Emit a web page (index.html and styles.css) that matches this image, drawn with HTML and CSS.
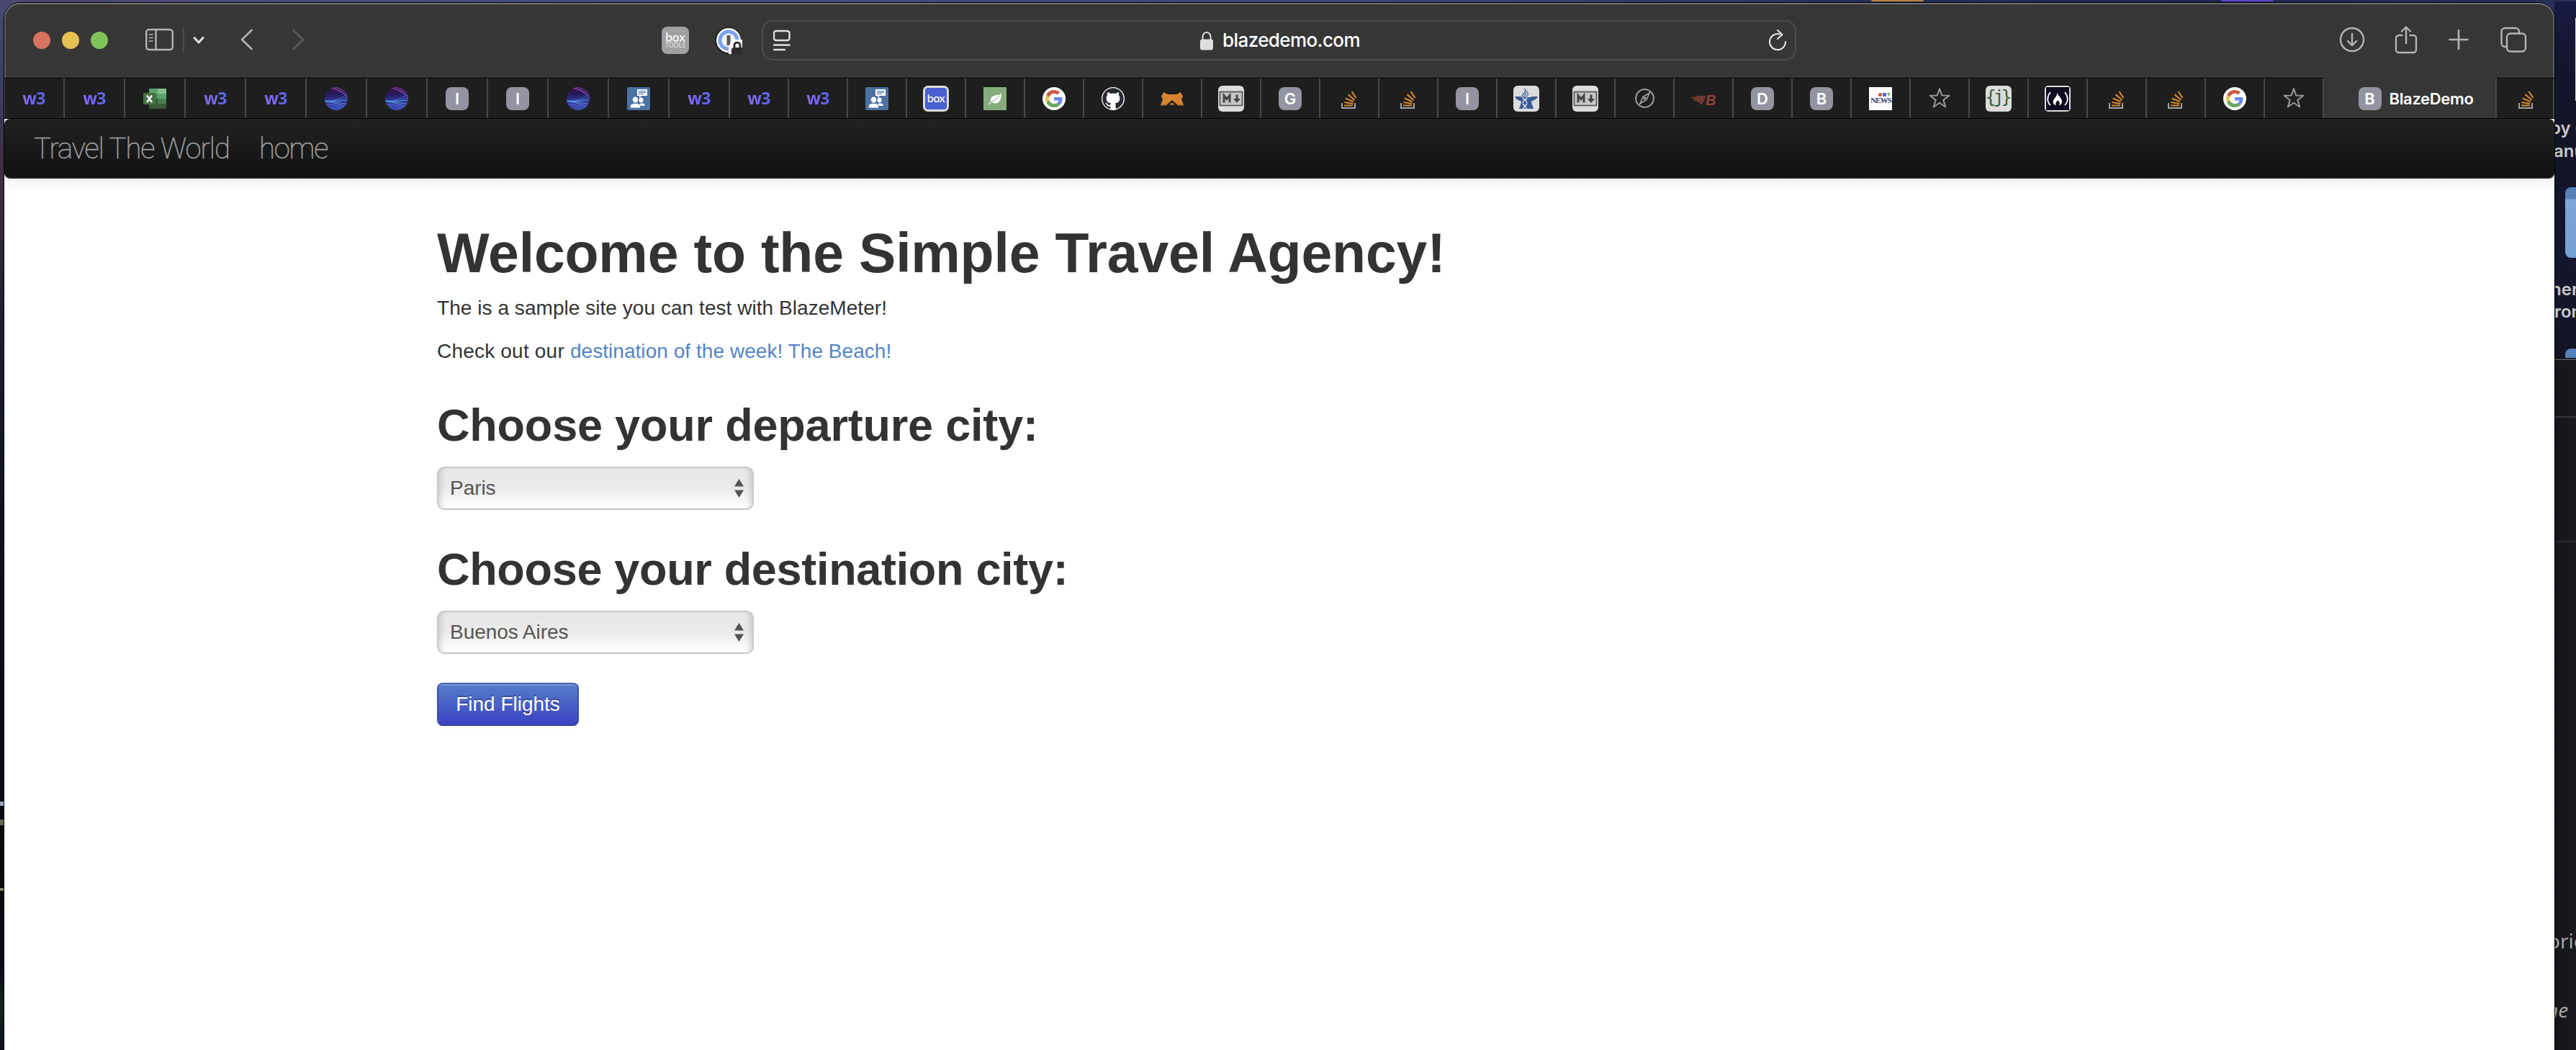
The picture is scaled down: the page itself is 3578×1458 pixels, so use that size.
FILE: index.html
```html
<!DOCTYPE html>
<html lang="en">
<head>
<meta charset="utf-8">
<title>BlazeDemo</title>
<link rel="stylesheet" href="styles.css">
</head>
<body>
<svg class="defs" width="0" height="0" aria-hidden="true">
  <defs>
    <linearGradient id="globe-fill" x1="0" y1="0" x2="0" y2="1">
      <stop offset="0" stop-color="#3a1440"/><stop offset=".3" stop-color="#26195c"/><stop offset=".6" stop-color="#2d3690"/><stop offset="1" stop-color="#4350c0"/>
    </linearGradient>
    <clipPath id="globe-clip"><circle cx="16" cy="16" r="16"/></clipPath>
    <symbol id="globe" viewBox="0 0 32 32">
      <g clip-path="url(#globe-clip)" fill="none">
        <rect width="32" height="32" fill="url(#globe-fill)"/>
        <path d="M8 1C16 3 24 5 31 12M10 0C18 5 26 7 32 15M13 0C20 1 27 5 31 9" stroke="#8a4cb4" stroke-width="1"/>
        <path d="M0 19C12 19 22 17 32 9M0 19C12 20 24 18 32 14" stroke="#4a6fd0" stroke-width=".9"/>
        <path d="M0 19.500C10 20 20 19 32 18M0 19.500C12 21 22 24 28 28M0 19.500C12 20 24 22 32 24" stroke="#5f98da" stroke-width=".9"/>
        <path d="M2 24C12 23 20 27 25 31" stroke="#5d6ee0" stroke-width=".8"/>
      </g>
    </symbol>
    <symbol id="excel" viewBox="0 0 32 32">
      <path d="M8 2h12v7H8z" fill="#5da06a"/><path d="M20 2h12v7H20z" fill="#81c08c"/>
      <path d="M8 9h12v7H8z" fill="#4b8a58"/><path d="M20 9h12v7H20z" fill="#5fa26d"/>
      <path d="M8 16h12v7H8z" fill="#35593a"/><path d="M20 16h12v7H20z" fill="#4a7f4c"/>
      <path d="M8 23h24v7H8z" fill="#38593a"/>
      <rect x="0" y="8" width="17" height="16" rx="1" fill="#447243"/>
      <path d="M5 11.500 12 21M12 11.500 5 21" stroke="#fff" stroke-width="2.400"/>
    </symbol>
    <symbol id="people" viewBox="0 0 32 32">
      <rect width="32" height="32" rx="2" fill="#4a72a2"/>
      <path d="M14 3h14v9H20l-3 3v-3h-3z" fill="#fff"/><path d="M16 5.500h10M16 7.500h10M16 9.500h7" stroke="#4a72a2" stroke-width="1"/>
      <ellipse cx="19.500" cy="18" rx="3" ry="3.500" fill="#fff"/><path d="M17 26v-2c0-2 7-2 7.500 0v2z" fill="#fff"/>
      <ellipse cx="11.500" cy="17.500" rx="4" ry="4.500" fill="#fff" stroke="#4a72a2" stroke-width=".8"/><path d="M4.500 29v-3c0-2 2-3 5-3.500h4c3 .5 5 1.500 5 3.500v3z" fill="#fff" stroke="#4a72a2" stroke-width=".8"/>
    </symbol>
    <symbol id="leaf" viewBox="0 0 32 32">
      <rect width="32" height="32" fill="#84ac7c"/>
      <path d="M25 8c0 8-2 14-8 14.500-2 .2-4-.5-5.500-1.500L8 24.500l-1-1 3-3C8 14 15 11 19 11c3 0 5-1 6-3z" fill="#fff"/>
      <path d="M10 21c5-2 9-5 12-9" stroke="#84ac7c" fill="none"/>
    </symbol>
    <symbol id="google" viewBox="0 0 48 48">
      <circle cx="24" cy="24" r="24" fill="#fff"/>
      <g transform="translate(6 6) scale(.75)">
        <path fill="#c95a41" d="M24 9.500c3.540 0 6.710 1.220 9.210 3.600l6.850-6.850C35.900 2.380 30.470 0 24 0 14.620 0 6.510 5.380 2.560 13.220l7.980 6.190C12.430 13.720 17.740 9.500 24 9.500z"/>
        <path fill="#6a86ee" d="M46.980 24.550c0-1.570-.15-3.090-.38-4.550H24v9.020h12.940c-.58 2.960-2.260 5.480-4.780 7.180l7.730 6c4.510-4.180 7.090-10.360 7.090-17.650z"/>
        <path fill="#ecbf45" d="M10.530 28.590c-.48-1.450-.76-2.990-.76-4.590s.27-3.140.76-4.590l-7.980-6.190C.92 16.460 0 20.120 0 24c0 3.880.92 7.540 2.560 10.780l7.970-6.190z"/>
        <path fill="#6aa560" d="M24 48c6.480 0 11.930-2.130 15.890-5.810l-7.730-6c-2.150 1.450-4.920 2.300-8.160 2.300-6.260 0-11.570-4.220-13.470-9.910l-7.980 6.190C6.510 42.620 14.620 48 24 48z"/>
      </g>
    </symbol>
    <symbol id="github" viewBox="-.7 -.7 17.400 17.400">
      <circle cx="8" cy="8" r="8.700" fill="#fff"/>
      <path fill="#25282e" d="M8 0C3.580 0 0 3.580 0 8c0 3.540 2.290 6.530 5.470 7.590.4.070.55-.17.55-.38 0-.19-.01-.82-.01-1.490-2.010.37-2.530-.49-2.690-.94-.09-.23-.48-.94-.82-1.130-.28-.15-.68-.52-.01-.53.63-.01 1.080.58 1.230.82.72 1.210 1.870.87 2.330.66.07-.52.28-.87.51-1.070-1.780-.2-3.640-.89-3.640-3.950 0-.87.31-1.590.82-2.150-.08-.2-.36-1.020.08-2.120 0 0 .67-.21 2.200.82.64-.18 1.320-.27 2-.27.68 0 1.360.09 2 .27 1.530-1.040 2.200-.82 2.200-.82.44 1.100.16 1.920.08 2.120.51.56.82 1.270.82 2.150 0 3.070-1.870 3.750-3.650 3.950.29.25.54.73.54 1.480 0 1.070-.01 1.930-.01 2.200 0 .21.15.46.55.38A8.013 8.013 0 0 0 16 8c0-4.420-3.580-8-8-8z"/>
    </symbol>
    <symbol id="fox" viewBox="0 0 32 32">
      <path d="M4 7l6 3h12l6-3 3 6-2 4 3 8h-8l-8-7-8 7H0l3-8-2-4z" fill="#d78433"/><path d="M.5 23.500h9L8 25.500H0zM22.500 23.500h9l.5 2h-8zM13 25l1-3h4l1 3z" fill="#b87026"/>
    </symbol>
    <symbol id="markdown" viewBox="0 0 36 36">
      <rect width="36" height="36" rx="6" fill="#dcdcdc"/><rect x="2.500" y="8.500" width="31" height="19" fill="#c6c6c6" stroke="#5a5a5a" stroke-width="1.800"/>
      <path d="M8 23.500v-10l4 5 4-5v10" fill="none" stroke="#444" stroke-width="3"/><path d="M26 12.500v7" stroke="#444" stroke-width="3"/><path d="M21 18h10l-5 6z" fill="#444"/>
    </symbol>
    <symbol id="stack" viewBox="0 0 22 25">
      <path d="M1 17v7h18v-7" fill="none" stroke="#a0a0a6" stroke-width="2"/>
      <path d="M4 20.500h12M4.300 16l12 2M5.800 10.500l11 4.800M9.500 5.200l9 7.800M14.500 1l6 9" stroke="#d4882f" stroke-width="2.200"/>
    </symbol>
    <symbol id="anvil" viewBox="0 0 36 36">
      <rect width="36" height="36" rx="6" fill="#dcdcdc"/>
      <path d="M2 15h8l2 1h12l2-1h8c-1 4-6 5-9 7 0 3 2 6 3 10H8c1-4 3-7 3-10-3-2-8-3-9-7z" fill="#3c5c96"/>
      <path d="M15 4c5 4-3 6-3 11h7c3-4 1-7-4-11z" fill="#b4c3de" stroke="#3c5c96"/><path d="M13 13l4-6M16 14l2-5" stroke="#3c5c96"/>
      <path d="M13 16c0 4 6 4 6 8s-5 4-5 8M19 16c0 4-6 4-6 8s5 4 5 8M13 19h6M13 27h6" stroke="#e4e8f0" stroke-width="1.100" fill="none"/>
    </symbol>
    <symbol id="compass" viewBox="0 0 27 27">
      <circle cx="13.500" cy="13.500" r="12.400" fill="none" stroke="#9c9c9c" stroke-width="2"/><path d="M20 6 16 15.500 7 21l4-9.500z" fill="none" stroke="#9c9c9c" stroke-width="1.800"/><circle cx="13.500" cy="13.500" r="2" fill="#9c9c9c"/>
    </symbol>
    <symbol id="wing" viewBox="0 0 20 14"><path d="M0 2l5 1 3-2h12v4l-2 1v3l-2 1v3h-4v-3H8V8H4V5H1z" fill="#6e382f"/></symbol>
    <symbol id="star" viewBox="0 0 28 28"><path d="M14 2l3.100 8.800 9.400.2-7.500 5.700 2.700 9L14 20.300l-7.700 5.400 2.700-9L1.500 11l9.400-.2z" fill="none" stroke="#979797" stroke-width="1.900" stroke-linejoin="round"/></symbol>
    <symbol id="flame" viewBox="0 0 36 36">
      <rect width="36" height="36" rx="5" fill="#dcdcdc"/><rect x="2" y="2" width="32" height="32" fill="#0d0b22"/>
      <path d="M8 9c-5 6-5 13 0 18M28 9c5 6 5 13 0 18" stroke="#fff" stroke-width="1.800" fill="none"/>
      <path d="M17 9c1 5 7 8 7 13 0 3-2 5-4 5 2-3 0-5-2-7-1 2-4 4-2 7-3 0-5-3-4-6 1-4 6-6 5-12z" fill="#fff"/>
    </symbol>
  </defs>
</svg>

<div class="desk desk-top"><i class="glow amber"></i><i class="glow violet"></i></div>
<div class="desk desk-left"><i class="lamp l1"></i><i class="lamp l2"></i><i class="lamp l3"></i></div>
<div class="desk desk-right">
  <i class="paper"></i>
  <span class="file-label n1">by c</span><span class="file-label n2">anu</span>
  <i class="folder f1"></i>
  <span class="file-label n3">her</span><span class="file-label n4">ron</span>
  <i class="folder f2"></i>
  <div class="back-window"><i class="rule"></i><i class="rule second"></i><span class="back-text t1">orie</span><span class="back-text t2">ne</span></div>
</div>

<div class="window">
  <header class="toolbar">
    <div class="lights"><i class="red"></i><i class="yellow"></i><i class="green"></i></div>
    <svg class="ic sidebar" width="40" height="32" viewBox="0 0 40 32"><rect x="1.200" y="2" width="36.600" height="28" rx="4"/><path d="M14.500 2v28"/><path d="M5.500 9h4.500M5.500 13.500h4.500M5.500 18h4.500" stroke-width="1.700"/></svg>
    <i class="split"></i>
    <svg class="ic bright caret" width="16" height="12" viewBox="0 0 16 12"><path d="M2 2.500l6 6.500 6-6.500" stroke-width="3"/></svg>
    <svg class="ic back" width="18" height="30" viewBox="0 0 18 30"><path d="M15.500 2 2 15l13.500 13" stroke-width="2.600"/></svg>
    <svg class="ic dim forward" width="18" height="30" viewBox="0 0 18 30"><path d="M2.500 2 16 15 2.500 28" stroke-width="2.600"/></svg>
    <div class="boxtools"><b>box</b><span>TOOLS</span></div>
    <svg class="onepass" width="38" height="38" viewBox="0 0 38 38"><circle cx="18.500" cy="19" r="18.500" fill="#1d1d1d"/><circle cx="19" cy="19" r="17" fill="#f6f6f6"/><circle cx="19" cy="19" r="12" fill="#f4f4f4" stroke="#7ba3f2" stroke-width="5"/><rect x="16.500" y="12" width="5" height="14" fill="#5a5650"/><path d="M19 38V27l6-9h13v20z" fill="#fff"/><path d="M23 38V31l2-2h13v9z" fill="#2c2c2c"/><path d="M27 30v-4a4 4 0 0 1 8 0v4" fill="none" stroke="#2c2c2c" stroke-width="3"/></svg>
    <div class="address">
      <svg class="ic bright reader" width="24" height="30" viewBox="0 0 24 30"><rect x="1" y="2" width="21.500" height="13" rx="3"/><path d="M1 21.500h21.500M1 28h15"/></svg>
      <div class="host">
        <svg width="20" height="26" viewBox="0 0 20 26"><rect x="1" y="10.500" width="18" height="15" rx="3" fill="#dedede"/><path d="M4.500 12V7a5.500 6 0 0 1 11 0v5" fill="none" stroke="#dedede" stroke-width="2"/></svg>
        <span>blazedemo.com</span>
      </div>
      <svg class="ic bright reload" width="25" height="30" viewBox="0 0 25 30"><path d="M15 6.500A11 11 0 1 0 23 17M12 1l6.500 6-6.500 6" stroke-width="2.100"/></svg>
    </div>
    <div class="actions">
      <svg class="ic" width="36" height="36" viewBox="0 0 36 36"><circle cx="18" cy="18" r="16"/><path d="M18 10v15M12 20l6 6 6-6"/></svg>
      <svg class="ic share" width="32" height="40" viewBox="0 0 32 40"><path d="M10.500 14H6a4 4 0 0 0-4 4v16a4 4 0 0 0 4 4h20a4 4 0 0 0 4-4V18a4 4 0 0 0-4-4h-4.500M16 25V3M10 8.500 16 2.500l6 6"/></svg>
      <svg class="ic plus" width="28" height="30" viewBox="0 0 28 30"><path d="M14 2v26M1.500 15h25" stroke-width="2.600"/></svg>
      <svg class="ic tabs-ic" width="38" height="38" viewBox="0 0 38 38"><rect x="10" y="10.500" width="26" height="25" rx="5"/><path d="M10 29H7.500a5 5 0 0 1-5-5V8a5 5 0 0 1 5-5H22a5 5 0 0 1 5 5v2.500"/></svg>
    </div>
  </header>

  <nav class="tabs">
    <div class="tab wide"><span class="w3">w3</span></div>
    <div class="tab wide"><span class="w3">w3</span></div>
    <div class="tab wide"><svg class="fav"><use href="#excel"/></svg></div>
    <div class="tab wide"><span class="w3">w3</span></div>
    <div class="tab wide"><span class="w3">w3</span></div>
    <div class="tab wide"><svg class="fav"><use href="#globe"/></svg></div>
    <div class="tab wide"><svg class="fav"><use href="#globe"/></svg></div>
    <div class="tab wide"><span class="letter">I</span></div>
    <div class="tab wide"><span class="letter">I</span></div>
    <div class="tab wide"><svg class="fav"><use href="#globe"/></svg></div>
    <div class="tab wide"><svg class="fav"><use href="#people"/></svg></div>
    <div class="tab wide"><span class="w3">w3</span></div>
    <div class="tab"><span class="w3">w3</span></div>
    <div class="tab"><span class="w3">w3</span></div>
    <div class="tab"><svg class="fav"><use href="#people"/></svg></div>
    <div class="tab"><span class="boxfav">box</span></div>
    <div class="tab"><svg class="fav"><use href="#leaf"/></svg></div>
    <div class="tab"><svg class="fav"><use href="#google"/></svg></div>
    <div class="tab"><svg class="fav"><use href="#github"/></svg></div>
    <div class="tab"><svg class="fav"><use href="#fox"/></svg></div>
    <div class="tab"><svg class="fav big"><use href="#markdown"/></svg></div>
    <div class="tab"><span class="letter">G</span></div>
    <div class="tab"><svg class="fav stk"><use href="#stack"/></svg></div>
    <div class="tab"><svg class="fav stk"><use href="#stack"/></svg></div>
    <div class="tab"><span class="letter">I</span></div>
    <div class="tab"><svg class="fav big"><use href="#anvil"/></svg></div>
    <div class="tab"><svg class="fav big"><use href="#markdown"/></svg></div>
    <div class="tab"><svg class="fav cmp"><use href="#compass"/></svg></div>
    <div class="tab"><span class="wingb"><svg width="20" height="14"><use href="#wing"/></svg><b>B</b></span></div>
    <div class="tab"><span class="letter">D</span></div>
    <div class="tab"><span class="letter">B</span></div>
    <div class="tab"><span class="ctv"><span class="dots"><i></i><i></i><i></i></span><b>NEWS</b></span></div>
    <div class="tab"><svg class="fav str"><use href="#star"/></svg></div>
    <div class="tab"><span class="json">{j}</span></div>
    <div class="tab"><svg class="fav big"><use href="#flame"/></svg></div>
    <div class="tab"><svg class="fav stk"><use href="#stack"/></svg></div>
    <div class="tab"><svg class="fav stk"><use href="#stack"/></svg></div>
    <div class="tab"><svg class="fav"><use href="#google"/></svg></div>
    <div class="tab"><svg class="fav str"><use href="#star"/></svg></div>
    <div class="tab active"><span class="letter">B</span><span class="title">BlazeDemo</span></div>
    <div class="tab last"><svg class="fav stk"><use href="#stack"/></svg></div>
  </nav>

  <div class="page">
    <div class="navbar"><a class="brand">Travel The World</a><a class="home">home</a></div>
    <main class="container">
      <h1>Welcome to the Simple Travel Agency!</h1>
      <p>The is a sample site you can test with BlazeMeter!</p>
      <p class="check"><span>Check out our </span><a>destination of the week! The Beach!</a></p>
      <h2>Choose your departure city:</h2>
      <div class="select"><span>Paris</span><svg width="13" height="26" viewBox="0 0 13 26"><path d="M6.500 0 13 10.500H0zM6.500 26 0 15.500h13z"/></svg></div>
      <h2 class="dest">Choose your destination city:</h2>
      <div class="select"><span>Buenos Aires</span><svg width="13" height="26" viewBox="0 0 13 26"><path d="M6.500 0 13 10.500H0zM6.500 26 0 15.500h13z"/></svg></div>
      <button class="btn" type="button">Find Flights</button>
    </main>
  </div>
</div>
</body>
</html>
```
FILE: styles.css
```css
* { box-sizing: border-box; }
html, body { margin: 0; height: 1458px; overflow: hidden; background: #0a0c14; }
body { position: relative; font-family: "Liberation Sans", Arial, sans-serif; color: #333; }
.defs { position: absolute; }
svg { display: block; flex: none; }
i { display: block; }

/* Desktop behind the window */
.desk { position: absolute; }
.desk-top { left: 0; top: 0; width: 3578px; height: 24px; background: linear-gradient(90deg, #4a4872, #434c80 25%, #40497c 50%, #28305e 72%, #1f2450 85%, #2a2f5c); }
.glow { position: absolute; top: 0; height: 2px; width: 73px; border-radius: 0 0 20px 20px; }
.amber { left: 2599px; background: #b8873f; }
.violet { left: 3085px; background: #5a48c8; }
.desk-left { left: 0; top: 0; width: 6px; height: 1458px; background: linear-gradient(#4a4876, #3d3c66 120px, #3c3040 230px, #302838 330px, #1c1e30 450px, #10131f 700px, #080b12 1000px, #06080c 1200px, #0a0c14 1340px, #17221f 1400px, #0b0e18); }
.lamp { position: absolute; left: 0; width: 5px; }
.l1 { top: 1113px; height: 6px; background: #9ea2cc; }
.l2 { top: 1138px; height: 8px; background: #67675a; }
.l3 { top: 1233px; height: 4px; background: #84846a; }
.desk-right { left: 3548px; top: 2px; width: 30px; height: 1456px; overflow: hidden; background: linear-gradient(#191a42, #14152e 80px, #131426 200px, #15162f 350px, #131423 497px); }
.paper { position: absolute; left: 29px; top: 23px; width: 1px; height: 115px; background: #d8d8d8; }
.file-label { position: absolute; font: 600 24px/30px Inter, sans-serif; color: #c8c8c8; white-space: nowrap; }
.n1 { left: -6px; top: 161px; }
.n2 { left: -1px; top: 193px; }
.n3 { left: -5px; top: 385px; }
.n4 { left: 0; top: 416px; }
.folder { position: absolute; left: 15px; width: 40px; border-radius: 8px; background: linear-gradient(#5680b8 0 16px, #7aa8d8 17px, #739fcd); }
.f1 { top: 258px; height: 98px; }
.f2 { top: 482px; height: 60px; background: #5680b8; }
.back-window { position: absolute; left: 0; top: 495px; width: 30px; height: 961px; border-top: 1px solid #000; background: linear-gradient(90deg, #15151a, #181a1e); box-shadow: inset 0 2px #4a4b4e; overflow: hidden; }
.rule { height: 2px; margin-top: 80px; background: #35363a; }
.rule.second { margin-top: 171px; background: #292a2e; }
.back-text { position: absolute; color: #a5a5a6; white-space: nowrap; font: 28px/34px "Noto Sans", sans-serif; }
.t1 { left: -9px; top: 791px; }
.t2 { left: -11px; top: 887px; font-style: italic; }

/* Browser window */
.window { position: absolute; left: 6px; top: 4px; width: 3542px; height: 1470px; display: flex; flex-direction: column; border-radius: 22px 22px 0 0; overflow: hidden; background: #fff; outline: 1px solid #000; }
.toolbar { position: relative; height: 105px; flex: none; display: flex; align-items: center; background: #363636; border-bottom: 1px solid #000; border-radius: 22px 22px 0 0; box-shadow: inset 0 2px #717171, inset 2px 0 #5c5c5c, inset -2px 0 #5c5c5c; }
.ic { fill: none; stroke: #b4b4b4; stroke-width: 2.4; stroke-linecap: round; stroke-linejoin: round; }
.ic.bright { stroke: #e2e2e2; }
.ic.dim { stroke: #5c5c5c; }
.lights { display: flex; gap: 16px; margin-left: 40px; }
.lights i { width: 24px; height: 24px; border-radius: 50%; }
.lights .red { background: #d7735e; }
.lights .yellow { background: #e6c050; }
.lights .green { background: #7fc257; }
.sidebar { margin: -2px 0 0 52px; }
.split { width: 2px; height: 36px; margin-left: 12px; background: #4a4a4a; }
.caret { margin-left: 12px; }
.back { margin: -2px 0 0 50px; }
.forward { margin: -2px 0 0 53px; }
.boxtools { width: 38px; height: 38px; margin-left: 496px; border-radius: 8px; background: #a0a0a0; display: flex; flex-direction: column; align-items: center; justify-content: center; color: #fff; font-family: Lato, sans-serif; }
.boxtools b { font-weight: 500; font-size: 17px; line-height: 15px; }
.boxtools span { font-size: 8.5px; line-height: 9px; color: #e8e8e8; letter-spacing: .1px; }
.onepass { margin-left: 36px; }
.address { width: 1437px; height: 56px; margin-left: 27px; padding: 0 11px 0 14px; border: 2px solid #4d4d4d; border-radius: 15px; display: flex; align-items: center; justify-content: space-between; }
.reader { width: 24px; }
.host { display: flex; align-items: center; gap: 12px; color: #fff; font: 500 26px/30px Inter, sans-serif; letter-spacing: -.6px; }
.host svg { margin-top: 2px; }
.actions { display: flex; align-items: center; margin: -3px 0 0 754px; }
.share { margin-left: 41px; }
.plus { margin-left: 43px; }
.tabs-ic { margin-left: 43px; }

/* Tab strip */
.tabs { height: 56px; flex: none; display: flex; background: #1e1e1e; border-bottom: 1px solid #000; box-shadow: inset 1px 0 #4a4a4a; position: relative; }
.tab { width: 82px; flex: none; display: flex; align-items: center; justify-content: center; border-right: 2px solid #484848; }
.tab.wide { width: 84px; }
.tab.active { width: 240px; margin-top: -1px; padding: 1px 0 0 17px; background: #363636; gap: 11px; }
.tab.last { width: 74px; flex: 1; padding-left: 4px; border-right: 2px solid #484848; }
.title { color: #fff; font: 600 22px/28px Inter, sans-serif; letter-spacing: -.35px; }
.fav { width: 32px; height: 32px; margin-top: 1px; }
.fav.big { width: 36px; height: 36px; }
.fav.stk { width: 22px; height: 25px; margin-top: 3px; }
.fav.cmp { width: 27px; height: 27px; margin-top: -1px; }
.fav.str { width: 30px; height: 30px; margin-top: -1px; }
.w3 { font: 700 23px/28px "Open Sans", sans-serif; letter-spacing: -.6px; margin-top: -1px; background: linear-gradient(90deg, #8a6cf5, #5a66f2); -webkit-background-clip: text; background-clip: text; color: transparent; }
.letter { width: 32px; height: 32px; margin-top: 1px; border-radius: 8px; background: #9493a0; color: #fff; text-align: center; font: 600 22px/33px Inter, sans-serif; }
.boxfav { width: 36px; height: 36px; margin-top: 1px; border: 3px solid #dcdcdc; border-radius: 7px; background: #4a5fd0; color: #fff; text-align: center; font: 500 16px/27px Lato, sans-serif; letter-spacing: -.5px; }
.wingb { display: flex; align-items: center; margin-top: 4px; color: #8c4438; font: italic 700 20px/20px "Liberation Sans", sans-serif; }
.wingb b { width: 14px; }
.ctv { width: 32px; height: 32px; margin-top: 1px; background: #fff; display: flex; flex-direction: column; align-items: flex-end; overflow: hidden; }
.dots { display: flex; gap: 1px; margin: 8px 2px 0 0; }
.dots i { width: 5px; height: 5px; background: #5468d8; }
.dots i:first-child { border-radius: 50%; background: #d05040; }
.dots i:last-child { background: #6cba50; clip-path: polygon(0 0, 100% 0, 50% 100%); }
.ctv b { color: #34456e; font: 700 11px/11px "Liberation Serif", serif; letter-spacing: -.9px; margin-right: 1px; }
.json { width: 36px; height: 36px; margin-top: 1px; border-radius: 6px; background: #dcdcdc; color: #38603a; text-align: center; font: 25px/32px "DejaVu Sans Mono", monospace; letter-spacing: -4px; text-indent: -4px; }

/* Page */
.page { flex: 1; background: #fff; }
.navbar { height: 83px; display: flex; padding-left: 41px; border-radius: 8px; border-bottom: 2px solid #252525; background: linear-gradient(#222, #111); box-shadow: 0 2px 20px rgba(0, 0, 0, .1); color: #999; font: 100 40px/84px Roboto, sans-serif; -webkit-text-stroke: .7px #999; }
.brand { width: 313px; letter-spacing: -1.05px; }
.home { letter-spacing: -1.2px; }
.container { padding: 63px 0 0 601px; }
h1, h2, p { margin: 0; white-space: nowrap; }
h1 { font-size: 77px; line-height: 80px; letter-spacing: -.2px; margin-bottom: 17px; }
h2 { font-size: 63px; line-height: 80px; letter-spacing: -.2px; margin: 42px 0 18px; }
h2.dest { letter-spacing: -.32px; }
p { font-size: 28px; line-height: 40px; letter-spacing: .05px; }
.check { display: flex; margin-top: 20px; white-space: pre; }
.check span { letter-spacing: .2px; }
.check a { color: #5284c8; }
.select { width: 440px; height: 60px; padding: 0 12px 0 16px; display: flex; align-items: center; justify-content: space-between; border: 2px solid #c8c8c8; border-radius: 10px; background: linear-gradient(#e6e6e6, #ebebeb 50%, #fff); box-shadow: inset 9px 0 6px -5px rgba(0, 0, 0, .12), inset -9px 0 6px -5px rgba(0, 0, 0, .12); color: #555; font-size: 28px; letter-spacing: -.05px; }
.select svg { fill: #555; }
.btn { display: block; width: 197px; height: 60px; margin-top: 40px; padding: 0; border: 2px solid; border-color: #4763b0 #3a4fb0 #36409a; border-radius: 8px; background: linear-gradient(#5680c8, #3a40c2); background-origin: border-box; box-shadow: inset 0 2px rgba(255, 255, 255, .2), 0 2px 4px rgba(0, 0, 0, .05); color: #fff; font: 28px/40px "Liberation Sans", Arial, sans-serif; text-shadow: 0 -2px rgba(0, 0, 0, .25); }
```
